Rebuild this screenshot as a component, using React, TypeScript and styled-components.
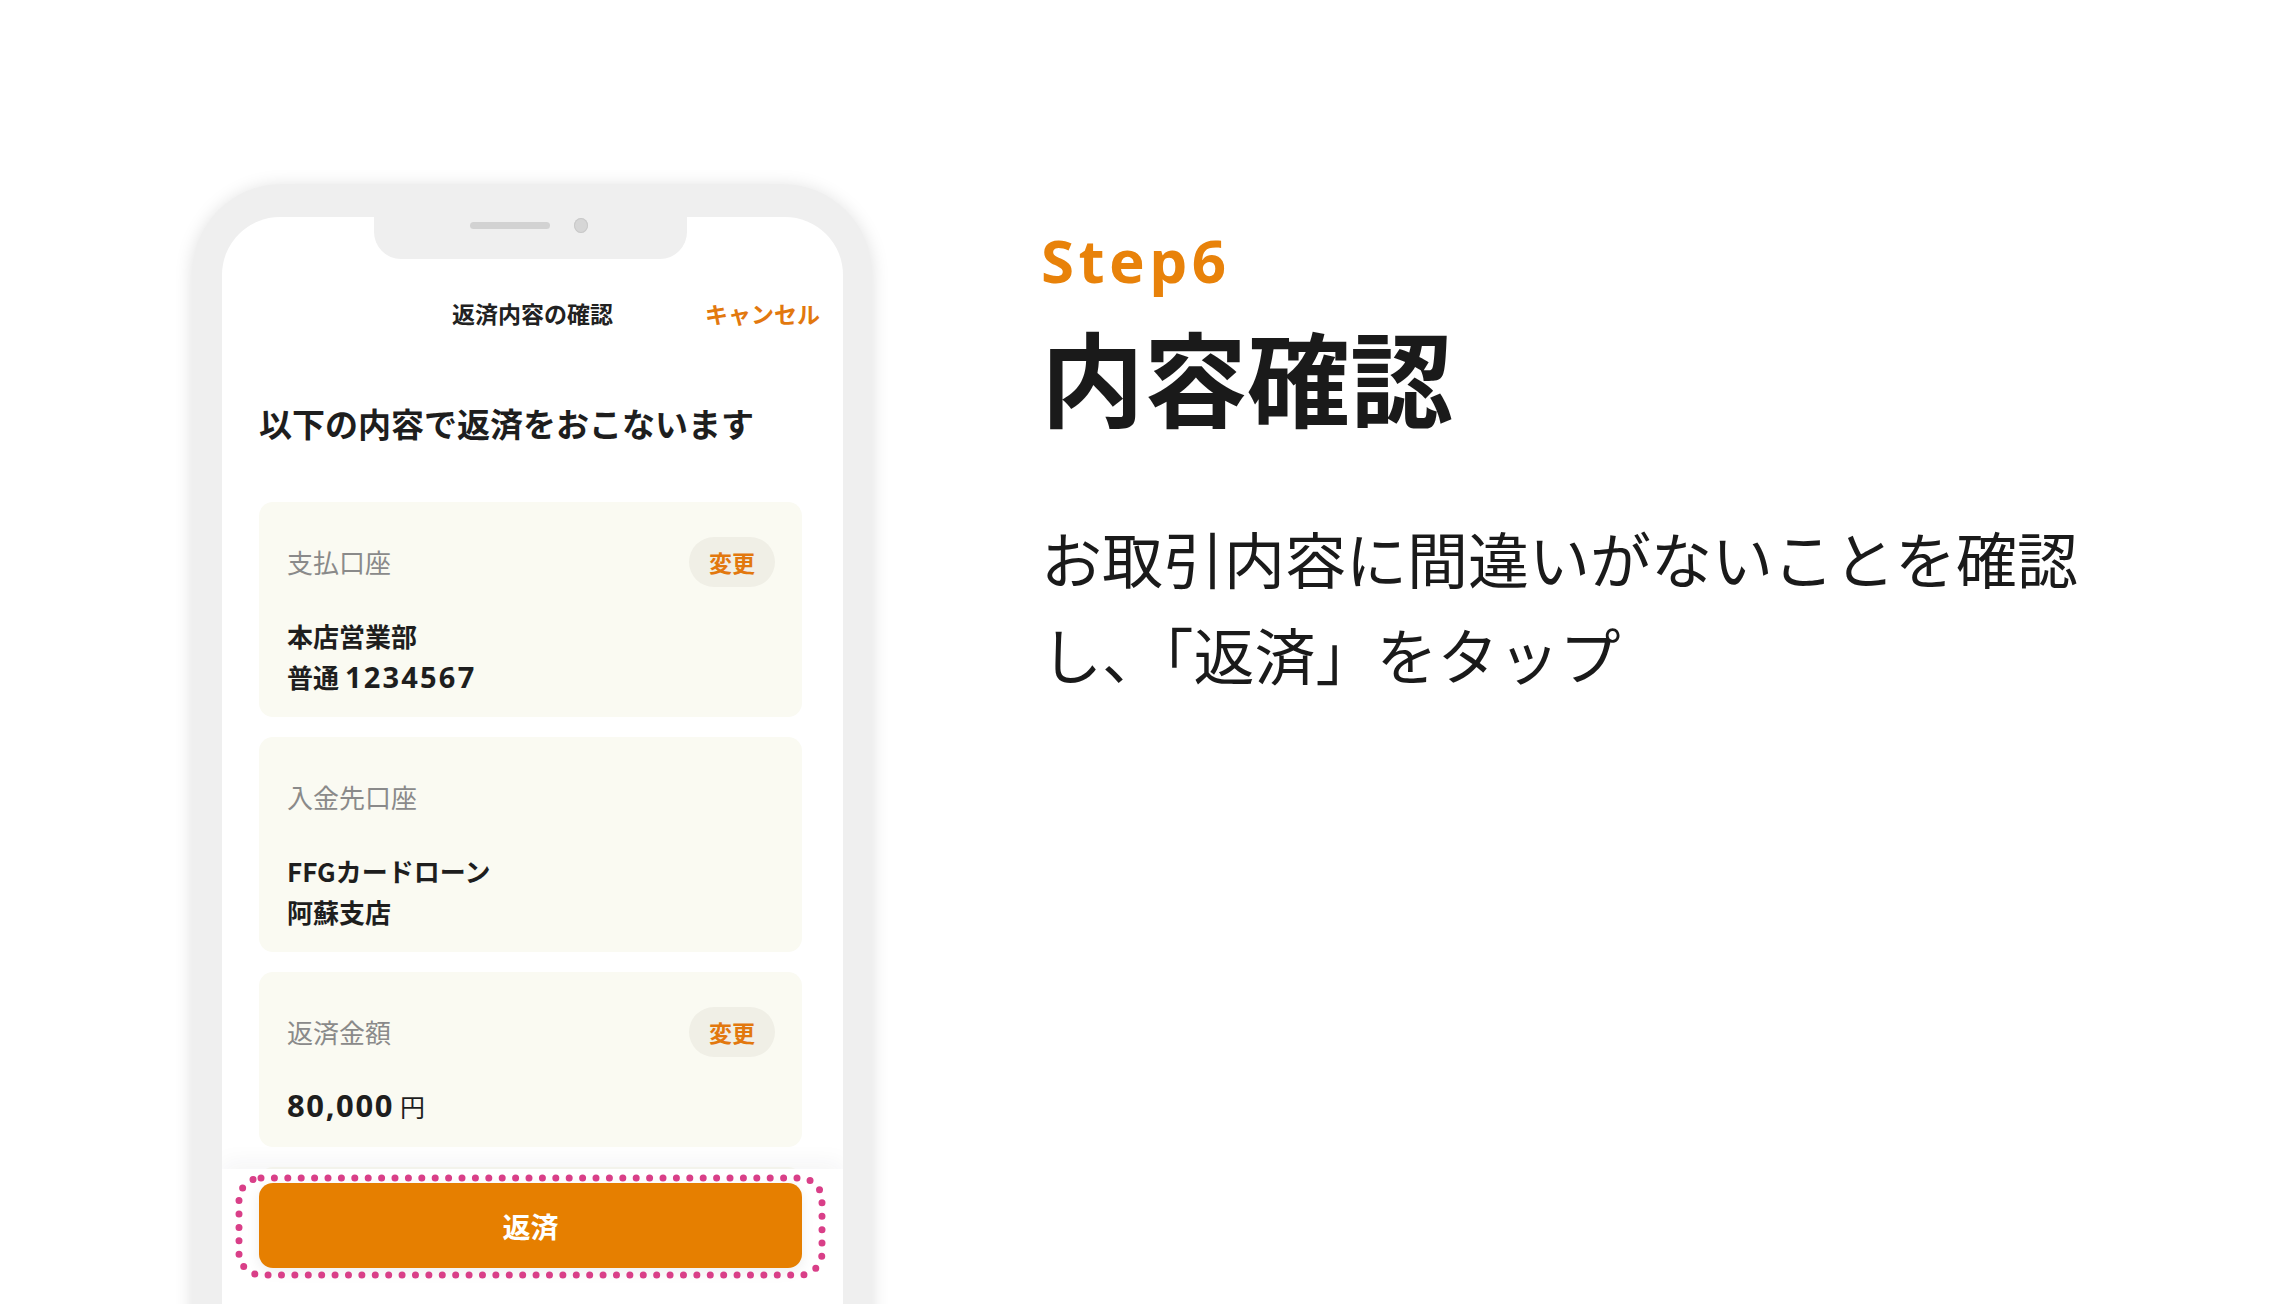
import React from "react";
import styled, { createGlobalStyle } from "styled-components";

const GlobalStyle = createGlobalStyle`
    html, body {
        margin: 0;
        padding: 0;
        background: #ffffff;
    }
    body {
        font-family: "Noto Sans CJK JP", "Noto Sans", sans-serif;
        color: #1e1e1e;
    }
    * {
        box-sizing: border-box;
    }
`;

const Page = styled.div`
    width: 2290px;
    height: 1304px;
    overflow: hidden;
    display: flex;
    align-items: flex-start;
`;

const PhoneCol = styled.div`
    margin: 184px 0 0 192px;
`;

const Frame = styled.div`
    width: 680px;
    height: 1200px;
    padding: 33px 29px 0 30px;
    background: #efefef;
    border-radius: 90px 90px 0 0;
    box-shadow: 0 2px 18px rgba(0, 0, 0, 0.13);
`;

const Screen = styled.div`
    height: 100%;
    background: #ffffff;
    border-radius: 58px 58px 0 0;
    overflow: hidden;
    display: flex;
    flex-direction: column;
`;

const Notch = styled.div`
    margin-left: 152px;
    width: 313px;
    height: 42px;
    flex-shrink: 0;
    background: #efefef;
    border-radius: 0 0 27px 27px;
    display: flex;
    align-items: center;
    align-self: flex-start;
    padding: 1px 0 26px 96px;
`;

const Speaker = styled.div`
    width: 80px;
    height: 7px;
    border-radius: 4px;
    background: #d2d2d2;
`;

const Camera = styled.div`
    margin-left: 24px;
    width: 14px;
    height: 15px;
    border-radius: 50%;
    background: #d6d6d6;
    box-shadow: inset 0 0 0 1px #c9c9c9;
`;

const Header = styled.div`
    margin-top: 24px;
    height: 60px;
    flex-shrink: 0;
    display: grid;
    grid-template-columns: 1fr auto 1fr;
    align-items: center;
    font-size: 23px;
    font-weight: 700;
    line-height: 60px;
`;

const HeaderTitle = styled.div`
    grid-column: 2;
    color: #222222;
`;

const Cancel = styled.div`
    grid-column: 3;
    justify-self: end;
    padding-right: 23px;
    color: #e2780e;
`;

const Lead = styled.h2`
    margin: 60px 0 0 37px;
    height: 40px;
    flex-shrink: 0;
    font-size: 33px;
    line-height: 40px;
    font-weight: 700;
    color: #1e1e1e;
`;

const CardList = styled.div`
    margin-top: 59px;
    height: 667px;
    flex-shrink: 0;
    overflow: hidden;
    padding: 0 41px 0 37px;
    display: flex;
    flex-direction: column;
    gap: 20px;
`;

const Card = styled.div`
    background: #fafaf2;
    border-radius: 14px;
    padding: 35px 27px 20px 28px;
    flex-shrink: 0;
`;

const HiddenCard = styled(Card)`
    height: 120px;
`;

const CardHead = styled.div`
    height: 50px;
    display: flex;
    align-items: center;
    justify-content: space-between;
`;

const Label = styled.div`
    font-size: 26px;
    line-height: 50px;
    color: #8a8a8a;
`;

const ChangeButton = styled.button`
    width: 86px;
    height: 50px;
    border: none;
    border-radius: 25px;
    background: #f0efe6;
    color: #e2780e;
    font-family: "Noto Sans CJK JP", sans-serif;
    font-size: 23px;
    font-weight: 700;
    padding: 0;
`;

const Value = styled.div`
    margin-top: 28px;
    font-size: 26px;
    line-height: 41px;
    font-weight: 700;
    color: #1e1e1e;
`;

const Num = styled.span<{ $size: number; $spacing: number }>`
    font-family: "Noto Sans", "Noto Sans CJK JP", sans-serif;
    font-size: ${(p) => p.$size}px;
    letter-spacing: ${(p) => p.$spacing}px;
`;

const Yen = styled.span`
    margin-left: 6px;
    font-weight: 400;
    font-size: 25px;
`;

const Footer = styled.div`
    position: relative;
    z-index: 1;
    flex: 1;
    background: #ffffff;
    padding: 14px 41px 0 37px;
    box-shadow: 0 -6px 22px rgba(30, 40, 60, 0.05);
`;

const ButtonWrap = styled.div`
    position: relative;
`;

const Submit = styled.button`
    display: block;
    width: 100%;
    height: 85px;
    border: none;
    border-radius: 14px;
    background: #e67f00;
    color: #ffffff;
    font-family: "Noto Sans CJK JP", sans-serif;
    font-size: 28px;
    font-weight: 700;
    box-shadow: 0 4px 14px rgba(0, 0, 0, 0.07);
`;

const Highlight = styled.svg`
    position: absolute;
    left: -24px;
    top: -9px;
    pointer-events: none;
`;

const TextCol = styled.div`
    margin-left: 169px;
    padding-top: 225px;
    display: flex;
    flex-direction: column;
`;

const StepLabel = styled.div`
    font-family: "Noto Sans", sans-serif;
    font-size: 60px;
    line-height: 70px;
    font-weight: 700;
    letter-spacing: 4.5px;
    color: #e8820a;
`;

const StepTitle = styled.h1`
    margin: 29px 0 0;
    font-size: 103px;
    line-height: 104px;
    font-weight: 700;
    color: #1a1a1a;
`;

const StepBody = styled.p`
    margin: 82px 0 0;
    width: 1070px;
    font-size: 61px;
    line-height: 96px;
    font-weight: 400;
    color: #1a1a1a;
`;

type Row = {
    label: string;
    editable: boolean;
    lines: React.ReactNode[];
};

const rows: Row[] = [
    {
        label: "支払口座",
        editable: true,
        lines: [
            "本店営業部",
            <>
                普通 <Num $size={29} $spacing={2.2}>1234567</Num>
            </>,
        ],
    },
    {
        label: "入金先口座",
        editable: false,
        lines: ["FFGカードローン", "阿蘇支店"],
    },
    {
        label: "返済金額",
        editable: true,
        lines: [
            <>
                <Num $size={31} $spacing={1.6}>80,000</Num>
                <Yen>円</Yen>
            </>,
        ],
    },
];

const App = (): JSX.Element => {
    return (
        <>
            <GlobalStyle />
            <Page>
                <PhoneCol>
                    <Frame>
                        <Screen>
                            <Notch>
                                <Speaker />
                                <Camera />
                            </Notch>
                            <Header>
                                <HeaderTitle>返済内容の確認</HeaderTitle>
                                <Cancel>キャンセル</Cancel>
                            </Header>
                            <Lead>以下の内容で返済をおこないます</Lead>
                            <CardList>
                                {rows.map((row) => (
                                    <Card key={row.label}>
                                        <CardHead>
                                            <Label>{row.label}</Label>
                                            {row.editable && <ChangeButton>変更</ChangeButton>}
                                        </CardHead>
                                        <Value>
                                            {row.lines.map((line, i) => (
                                                <div key={i}>{line}</div>
                                            ))}
                                        </Value>
                                    </Card>
                                ))}
                                <HiddenCard />
                            </CardList>
                            <Footer>
                                <ButtonWrap>
                                    <Submit>返済</Submit>
                                    <Highlight width="591" height="105" viewBox="0 0 591 105">
                                        <rect
                                            x="4"
                                            y="4"
                                            width="583"
                                            height="97"
                                            rx="22"
                                            fill="none"
                                            stroke="#d93f88"
                                            strokeWidth="7"
                                            strokeLinecap="round"
                                            strokeDasharray="0 13.4"
                                        />
                                    </Highlight>
                                </ButtonWrap>
                            </Footer>
                        </Screen>
                    </Frame>
                </PhoneCol>
                <TextCol>
                    <StepLabel>Step6</StepLabel>
                    <StepTitle>内容確認</StepTitle>
                    <StepBody>お取引内容に間違いがないことを確認し、「返済」をタップ</StepBody>
                </TextCol>
            </Page>
        </>
    );
};

export default App;
